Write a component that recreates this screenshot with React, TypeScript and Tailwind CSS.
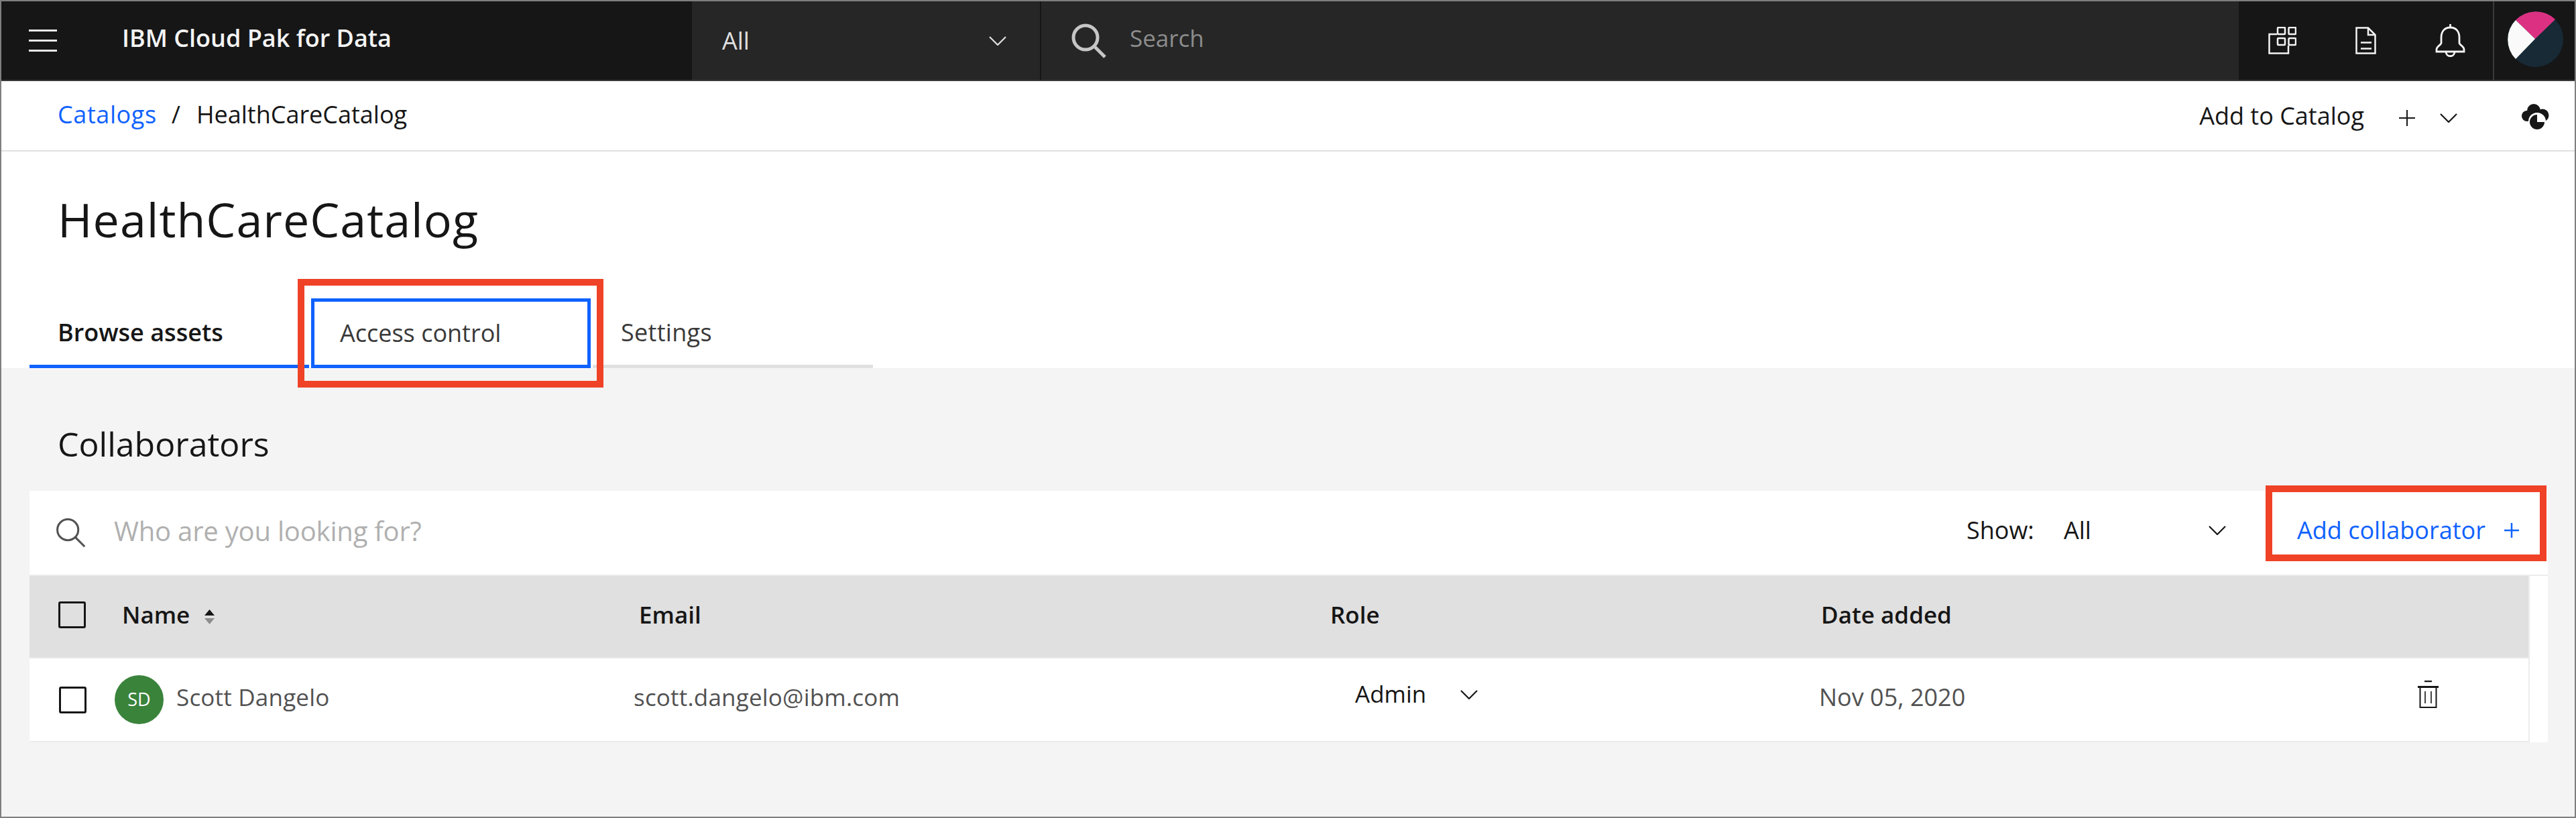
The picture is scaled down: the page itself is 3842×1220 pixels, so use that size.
function Chevron({ color }: { color: string }) {
  return (
    <svg width="26" height="14" viewBox="0 0 26 14" fill="none" stroke={color} strokeWidth="2.2" className="shrink-0">
      <path d="M1 1 L13 13 L25 1" />
    </svg>
  );
}

function SearchIcon({ size, color, stroke }: { size: number; color: string; stroke: number }) {
  return (
    <svg width={size} height={size} viewBox="0 0 52 52" fill="none" stroke={color} strokeWidth={stroke} className="shrink-0">
      <circle cx="21" cy="21" r="18" />
      <path d="M34 34 L50 50" />
    </svg>
  );
}

function Checkbox() {
  return <div className="w-[41px] h-[40px] shrink-0 bg-transparent border-[3px] border-[#161616] rounded-[3px]"></div>;
}

function CloudIcon() {
  return (
    <svg width="41" height="38" viewBox="21 12 41 38" className="shrink-0">
      <circle cx="39" cy="22" r="10" fill="#161616" />
      <circle cx="29" cy="30" r="8" fill="#161616" />
      <circle cx="52" cy="29" r="9.5" fill="#161616" />
      <rect x="29" y="24" width="24" height="13" fill="#161616" />
      <circle cx="44" cy="38" r="13" fill="#fff" />
      <path d="M44 28 A11 11 0 1 0 55 39 L44 39 Z" fill="#161616" />
    </svg>
  );
}

export default function App() {
  return (
    <div className="relative w-[3842px] h-[1220px] overflow-hidden flex flex-col border-2 border-[#7f7f7f] bg-[#f4f4f4] text-[#161616] font-['Open_Sans',sans-serif]">
      {/* top bar */}
      <header className="flex h-[119px] shrink-0 border-b-2 border-[#393939] bg-[#161616]">
        <div className="flex items-center w-[1030px] pl-[41px]">
          <div className="flex flex-col gap-[12px] w-[42px]">
            <div className="h-[3px] bg-[#e8e8e8]"></div>
            <div className="h-[3px] bg-[#e8e8e8]"></div>
            <div className="h-[3px] bg-[#e8e8e8]"></div>
          </div>
          <span className="ml-[97px] pb-[8px] text-[36px] font-semibold text-[#f4f4f4]">IBM Cloud Pak for Data</span>
        </div>
        <div className="flex items-center w-[521px] pl-[45px] bg-[#262626] border-r-2 border-[#161616]">
          <span className="w-[398px] text-[36px] text-[#e0e0e0]">All</span>
          <Chevron color="#e0e0e0" />
        </div>
        <div className="flex items-center w-[1786px] pl-[45px] bg-[#262626]">
          <SearchIcon size={52} color="#c6c6c6" stroke={5} />
          <span className="ml-[35px] pb-[6px] text-[35px] text-[#8d8d8d]">Search</span>
        </div>
        <div className="flex items-center w-[379px] pl-[44px] bg-[#161616] rounded-bl-[4px]">
          <svg width="42" height="41" viewBox="0 0 42 41" fill="none" stroke="#f4f4f4" strokeWidth="2.5" className="shrink-0">
            <rect x="14" y="1" width="11" height="10" rx="1" />
            <rect x="30.5" y="1" width="10.5" height="10" rx="1" />
            <rect x="14" y="17" width="11" height="10" rx="1" />
            <rect x="30.5" y="17" width="10.5" height="10" rx="1" />
            <path d="M13 11 H1.5 V39.5 H30 V28" />
          </svg>
          <svg width="31" height="41" viewBox="0 0 31 41" fill="none" stroke="#f4f4f4" strokeWidth="2.5" className="ml-[88px] shrink-0">
            <path d="M1.5 1.5 H19 L29.5 12 V39.5 H1.5 Z" />
            <path d="M19 1.5 V12 H29.5" />
            <path d="M8 23.5 H24 M8 32.5 H24" />
          </svg>
          <svg width="45" height="49" viewBox="0 0 45 49" fill="none" stroke="#f4f4f4" strokeWidth="2.8" className="ml-[88px] shrink-0">
            <path d="M22.5 5 C13 5 9 12 9 20 V28 C9 31 2 33 2 38 V41 H43 V38 C43 33 36 31 36 28 V20 C36 12 32 5 22.5 5 Z" />
            <path d="M22.5 0 V5" />
            <path d="M16 41 C16 50 29 50 29 41" />
          </svg>
        </div>
        <div className="flex items-center flex-1 pl-[20px] border-l-2 border-[#393939]">
          <svg width="83" height="83" viewBox="0 0 83 83" className="shrink-0 mt-[-4px]">
            <circle cx="41.5" cy="41.5" r="41.5" fill="#172a36" />
            <path d="M12 13 A41.5 41.5 0 0 1 71 12 L41 41 Z" fill="#dc3182" />
            <path d="M12 13 L41 41 L12 71 A41.5 41.5 0 0 1 12 13 Z" fill="#fafafa" />
          </svg>
        </div>
      </header>

      {/* breadcrumb */}
      <div className="flex items-center h-[105px] shrink-0 pl-[84px] pr-[38px] bg-white border-b-2 border-[#e0e0e0]">
        <span className="pb-[4px] text-[36px] tracking-[0.6px] text-[#0f62fe]">Catalogs</span>
        <span className="ml-[22px] pb-[4px] text-[36px]">/</span>
        <span className="ml-[24px] pb-[4px] text-[36px]">HealthCareCatalog</span>
        <span className="ml-auto text-[36px]">Add to Catalog</span>
        <svg width="24" height="24" viewBox="0 0 24 24" fill="none" stroke="#161616" strokeWidth="2" className="ml-[52px] mt-[6px] shrink-0">
          <path d="M12 0 V24 M0 12 H24" />
        </svg>
        <div className="ml-[37px] mt-[6px]">
          <Chevron color="#161616" />
        </div>
        <div className="ml-[96px] mt-[2px]">
          <CloudIcon />
        </div>
      </div>

      {/* title and tabs */}
      <div className="shrink-0 bg-white">
        <div className="h-[219px] pt-[51px] pl-[84px]">
          <h1 className="h-[100px] leading-[100px] text-[70px] tracking-[1px] font-normal">HealthCareCatalog</h1>
        </div>
        <div className="flex gap-[3px] pl-[42px] h-[104px]">
          <div className="flex items-center w-[417px] pl-[42px] pt-[2px] border-b-[5px] border-[#0f62fe] text-[36px] font-semibold">Browse assets</div>
          <div className="flex items-center w-[417px] pl-[38px] border-[5px] border-[#0f62fe] text-[36px] text-[#393939]">Access control</div>
          <div className="flex items-center w-[418px] pl-[42px] pt-[2px] border-b-[5px] border-[#e0e0e0] text-[36px] tracking-[0.3px] text-[#393939]">Settings</div>
        </div>
      </div>

      {/* collaborators */}
      <main className="flex-1 pl-[42px] pr-[40px] pt-[78px]">
        <h2 className="h-[70px] leading-[70px] mb-[35px] pl-[42px] text-[50px]">Collaborators</h2>
        <div className="bg-white">
          <div className="flex items-center h-[127px] pl-[39px] pr-[43px] border-b-2 border-[#ececec]">
            <SearchIcon size={45} color="#525252" stroke={3.5} />
            <span className="ml-[42px] pb-[6px] text-[40px] tracking-[-0.2px] text-[#b0b0b0]">Who are you looking for?</span>
            <div className="flex items-center ml-auto pb-[8px] text-[36px]">
              <span className="w-[145px]">Show:</span>
              <span className="w-[216px]">All</span>
              <Chevron color="#161616" />
              <span className="ml-[106px] w-[309px] text-[#0f62fe]">Add collaborator</span>
              <svg width="22" height="22" viewBox="0 0 22 22" fill="none" stroke="#0f62fe" strokeWidth="2.5" className="shrink-0">
                <path d="M11 0 V22 M0 11 H22" />
              </svg>
            </div>
          </div>
          <div className="w-[3729px] border-r-2 border-[#ececec]">
            <div className="flex items-center h-[123px] pl-[43px] bg-[#e0e0e0] border-b-2 border-[#e8e8e8] text-[35px] font-semibold">
              <div className="mb-[5px]">
                <Checkbox />
              </div>
              <div className="flex items-center w-[771px] ml-[54px]">
                <span className="pb-[4px]">Name</span>
                <svg width="15" height="22" viewBox="0 0 15 22" className="ml-[22px] shrink-0">
                  <path d="M7.5 0 L15 9 H0 Z" fill="#161616" />
                  <path d="M7.5 22 L15 13 H0 Z" fill="#8d8d8d" />
                </svg>
              </div>
              <span className="w-[1031px] pb-[4px]">Email</span>
              <span className="w-[732px] pb-[4px]">Role</span>
              <span className="pb-[4px]">Date added</span>
            </div>
            <div className="flex items-center h-[125px] pl-[44px] border-b-2 border-[#ececec] text-[35px] text-[#525252]">
              <Checkbox />
              <div className="flex items-center justify-center w-[73px] h-[73px] ml-[42px] shrink-0 rounded-full bg-[#3a833b] text-[27px] font-normal text-white">SD</div>
              <span className="w-[682px] ml-[19px] pb-[7px] tracking-[0.2px]">Scott Dangelo</span>
              <span className="w-[1076px] pb-[7px] tracking-[0.2px]">scott.dangelo@ibm.com</span>
              <div className="flex items-center w-[692px] pb-[16px] text-[#161616]">
                <span className="w-[157px]">Admin</span>
                <Chevron color="#161616" />
              </div>
              <span className="w-[893px] pb-[7px] text-[36px]">Nov 05, 2020</span>
              <svg width="31" height="41" viewBox="0 0 31 41" fill="none" stroke="#161616" className="mb-[16px] shrink-0">
                <path d="M10 1 H21" strokeWidth="2.5" />
                <path d="M0 9.5 H31" strokeWidth="3" />
                <rect x="3.5" y="10" width="24" height="30" strokeWidth="2" />
                <path d="M11 16 V34 M20 16 V34" strokeWidth="1.6" />
              </svg>
            </div>
          </div>
        </div>
      </main>

      {/* annotation boxes */}
      <div className="absolute left-[442px] top-[414px] w-[456px] h-[162px] border-[10px] border-[#ef4227]"></div>
      <div className="absolute left-[3377px] top-[722px] w-[419px] h-[113px] border-[10px] border-[#ef4227]"></div>
    </div>
  );
}
